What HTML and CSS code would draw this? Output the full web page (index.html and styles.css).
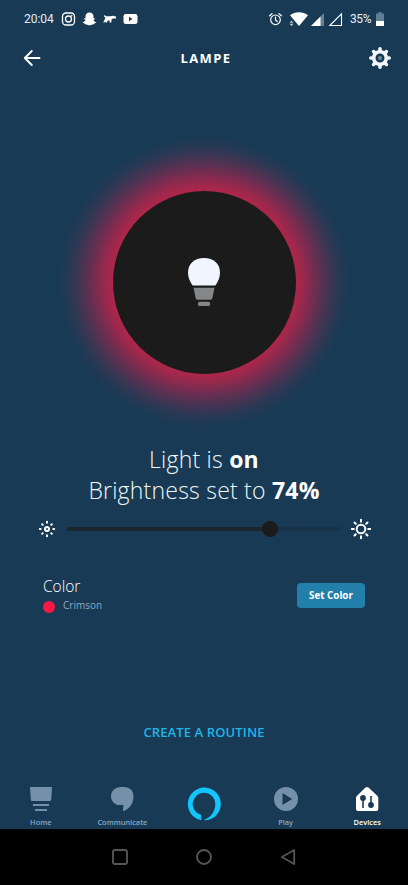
FILE: index.html
```html
<!DOCTYPE html>
<html lang="en">
<head>
<meta charset="utf-8">
<title>Lampe</title>
<link rel="stylesheet" href="styles.css">
</head>
<body>
<main class="app">
  <div class="status">
    <span class="clock">20:04</span>
    <svg class="notifications" width="78" height="16" viewBox="0 0 78 16">
      <g fill="none" stroke="#fff" stroke-width="1.3"><rect x="1.500" y="2" width="12" height="12" rx="3.5"/><circle cx="7.500" cy="8" r="3"/></g>
      <circle cx="10.700" cy="4.700" r=".8" fill="#fff"/>
      <path fill="#fff" d="M28.500 1.500c2.600 0 4 1.700 4 4v2l1.500-.2c.2.900-.6 1.200-1.400 1.600.5 1.400 1.500 2 2.700 2.400-.1.900-1.200 1-2 1.200l-.4.800c-1.500-.2-2.200.9-4.400 1.100-2.200-.2-2.900-1.300-4.400-1.100l-.4-.8c-.8-.2-1.900-.3-2-1.200 1.200-.4 2.200-1 2.700-2.400-.8-.4-1.600-.7-1.400-1.600l1.500.2v-2c0-2.300 1.400-4 4-4z"/>
      <path fill="#fff" d="M43.500 4l1.700 1.300h4.500l2-.6 3.300.8v2h-3l-1.500 1-.2 3h-1.600l-.2-2h-1.800l-.7 2h-1.500l.1-1.600-1.100 1.600h-1.300l1.600-3.200.6-1.800-1.500-1z"/>
      <rect x="62.500" y="3" width="14" height="10" rx="2.300" fill="#fff"/><path d="M68 5.800v4.400l3.500-2.200z" fill="#183a54"/>
    </svg>
    <svg class="signals" width="76" height="18" viewBox="0 0 76 18">
      <g fill="none" stroke="#fff" stroke-width="1.200" stroke-linecap="round"><circle cx="7.500" cy="9.800" r="4.800"/><path d="M7.500 7v3l1.700 1.500M1.500 5.800L4 3.700M13.500 5.800L11 3.700"/></g>
      <path fill="#fff" d="M22 5.200c5-3.900 13-3.900 18 0L31 16z"/>
      <path fill="#bcc6ce" d="M23.500 10.500l2 2.300h-4zM23.500 16l2-2.300h-4z"/>
      <path fill="#668097" d="M56 3v13H43z"/><path fill="#fff" d="M52.500 6.500V16H43z"/>
      <path d="M73.500 3.800v11.700H61.800z" fill="none" stroke="#fff" stroke-width="1.100"/>
    </svg>
    <span class="percent">35%</span>
    <svg class="battery" width="8" height="16" viewBox="0 0 8 16"><path fill="#617d91" d="M2.500 1h3v1.500H8V10H0V2.500h2.500z"/><path fill="#fff" d="M0 10h8v5H0z"/></svg>
  </div>

  <header class="header">
    <svg width="18" height="18" viewBox="0 0 18 18" fill="none" stroke="#fff" stroke-width="1.900" stroke-linecap="round" stroke-linejoin="round"><path d="M8.800 2L1.800 9l7 7M2 9h14.500"/></svg>
    <h1>LAMPE</h1>
    <svg class="gear" width="22" height="22" viewBox="-11 -11 22 22">
      <g stroke="#f3f7fc" stroke-width="3.600" stroke-linecap="round"><path d="M0-9.200V-7M0 7v2.200M-9.200 0H-7M7 0h2.200M-6.400-6.400L-5-5M5 5l1.400 1.400M-6.400 6.400L-5 5M5-5l1.400-1.400"/></g>
      <circle r="6.300" fill="none" stroke="#f3f7fc" stroke-width="3.600"/><circle r="2" fill="#6f8ba0"/>
    </svg>
  </header>

  <section class="hero">
    <div class="glow"><div class="lamp">
      <svg width="34" height="50" viewBox="0 0 34 50">
        <path fill="#f1f5ff" d="M17 1c9.500 0 16 5.500 16 14.800 0 5-2 8.900-4.600 12.700H5.600C3 24.700 1 20.800 1 15.800 1 6.500 7.500 1 17 1z"/>
        <path fill="#858688" d="M6.500 30.700h21l-2 9.600c-.3 1.800-.8 2.500-2 2.500h-13c-1.200 0-1.700-.7-2-2.500z"/>
        <rect x="11" y="44.700" width="12" height="4.300" rx="1.500" fill="#858688"/>
      </svg>
    </div></div>
  </section>

  <div class="summary">
    <p class="state">Light is <b>on</b></p>
    <p class="level">Brightness set to <b>74%</b></p>
  </div>

  <div class="dimmer">
    <svg width="18" height="18" viewBox="-9 -9 18 18"><circle r="2" fill="none" stroke="#fff" stroke-width="2.100"/><g stroke="#fff" stroke-width="2" stroke-linecap="round"><path d="M0-7.200v.9M0 6.300v.9M-7.200 0h.9M6.300 0h.9M-4.800-4.800l.5.500M4.300 4.300l.5.500M-4.800 4.800l.5-.5M4.300-4.300l.5-.5"/></g></svg>
    <div class="track"><div class="filled"></div><div class="knob"></div></div>
    <svg width="22" height="22" viewBox="-11 -11 22 22"><circle r="4.300" fill="none" stroke="#fff" stroke-width="2"/><g stroke="#fff" stroke-width="2" stroke-linecap="round"><path d="M0-9.200v2M0 7.200v2M-9.200 0h2M7.200 0h2M-6.500-6.500l1.300 1.300M5.200 5.200l1.300 1.300M-6.500 6.500l1.300-1.300M5.200-5.200l1.300-1.300"/></g></svg>
  </div>

  <section class="color">
    <div>
      <h2>Color</h2>
      <div class="value"><i class="swatch"></i><span>Crimson</span></div>
    </div>
    <button class="set">Set Color</button>
  </section>

  <div class="routine"><a>CREATE A ROUTINE</a></div>

  <nav class="tabs">
    <div class="tab">
      <svg width="26" height="28" viewBox="0 0 26 28" fill="#7591aa"><path d="M2 2h22l-.8 12.500c-.1 1-.6 1.500-1.500 1.500H4.300c-.9 0-1.400-.5-1.500-1.500z"/><path d="M5 19h16v2H5zM7 24h12v2H7z"/></svg>
      <span>Home</span>
    </div>
    <div class="tab">
      <svg width="26" height="28" viewBox="0 0 26 28"><path fill="#7591aa" d="M12 2h3c5.500 0 9.500 3.500 9.500 9 0 8-4.500 13.500-10.500 15.200l.3-6.100H11c-5 0-9-3.600-9-8.800C2 5.600 6.500 2 12 2z"/></svg>
      <span>Communicate</span>
    </div>
    <div class="tab alexa">
      <svg width="34" height="36" viewBox="-17 -17 34 36"><path fill="#12c5fc" fill-rule="evenodd" d="M-2.800 16.200A16.500 16.500 0 1 1 .6 16.500V15.500C5 14.200 11.300 9 11.300 0A11.300 11.300 0 1 0-2.800 11z"/></svg>
    </div>
    <div class="tab">
      <svg width="26" height="28" viewBox="0 0 26 28"><circle cx="13" cy="14" r="12" fill="#7591aa"/><path fill="#183a54" d="M9.500 8l9.700 6-9.700 6z"/></svg>
      <span>Play</span>
    </div>
    <div class="tab active">
      <svg width="26" height="28" viewBox="0 0 26 28"><path fill="#fff" d="M11.500 2.500q1.500-1.200 3 0l8.500 8c1 .9 1.300 1.500 1.300 2.700V24q0 2-2 2H4Q2 26 2 24V13.200c0-1.200.3-1.800 1.300-2.700z"/><g fill="#183a54"><circle cx="9" cy="13" r="2.900"/><circle cx="17" cy="20" r="2.900"/></g><path stroke="#183a54" stroke-width="1.600" d="M9 13v10M17 11v9"/></svg>
      <span>Devices</span>
    </div>
  </nav>

  <footer class="system">
    <svg width="18" height="18" viewBox="0 0 18 18"><rect x="2" y="2" width="14" height="14" rx="2" fill="none" stroke="#555" stroke-width="1.900"/></svg>
    <svg width="18" height="18" viewBox="0 0 18 18"><circle cx="9" cy="9" r="7" fill="none" stroke="#555" stroke-width="1.900"/></svg>
    <svg width="18" height="18" viewBox="0 0 18 18"><path d="M15.200 2v14L2.800 9z" fill="none" stroke="#555" stroke-width="1.800" stroke-linejoin="round"/></svg>
  </footer>
</main>
</body>
</html>
```
FILE: styles.css
```css
* { box-sizing: border-box; }
body { margin: 0; background: #183a54; color: #fff; font-family: "Open Sans", "Noto Sans", sans-serif; }
h1, h2, p { margin: 0; }
svg { display: block; flex: none; }
.app { width: 408px; height: 885px; display: flex; flex-direction: column; overflow: hidden; }

.status { height: 36px; flex: none; display: flex; align-items: center; padding: 1px 24px 0; font: 12px Roboto, sans-serif; color: #e6edf4; white-space: nowrap; }
.clock { width: 37px; letter-spacing: -.05px; }
.signals { margin-left: auto; }
.percent { width: 26px; margin-left: 6px; font-size: 12px; letter-spacing: -.4px; }
.battery { margin-left: 0; }

.header { height: 44px; flex: none; display: flex; align-items: center; justify-content: space-between; padding: 0 17px 0 23px; }
.header h1 { font-size: 13px; line-height: 18px; font-weight: 700; letter-spacing: 1.4px; padding-left: 2px; }

.hero { height: 364px; flex: none; display: flex; justify-content: center; padding-top: 41px; }
.glow { width: 322px; height: 322px; display: grid; place-items: center; background: radial-gradient(circle, #b3254b 0, #b3254b 90px, #9d284c 98px, #7b2c50 108px, #583152 118px, #393653 128px, #243954 137px, #1a3a54 145px, #183a54 153px); }
.lamp { width: 183px; height: 183px; border-radius: 50%; background: #1b1b1b; display: grid; place-items: center; }

.summary { height: 64px; flex: none; font-size: 23px; line-height: 31px; font-weight: 300; text-align: center; color: #f2f7fb; letter-spacing: .22px; }
.summary b { font-weight: 700; color: #fff; }

.dimmer { height: 42px; flex: none; display: flex; align-items: center; padding: 0 36px 0 38px; }
.track { position: relative; flex: 1; height: 4px; margin: 0 9px 0 11px; border-radius: 2px; background: #17334a; }
.filled { width: 74%; height: 4px; border-radius: 2px; background: #1a252e; }
.knob { position: absolute; left: 74%; top: -6px; width: 16px; height: 16px; margin-left: -8px; border-radius: 50%; background: #1b1b1b; }

.color { height: 90px; flex: none; display: flex; align-items: center; justify-content: space-between; padding: 0 43px; }
.color h2 { font-size: 15.500px; line-height: 22px; font-weight: 300; }
.value { display: flex; align-items: center; gap: 8px; height: 18px; color: #8aabc2; font-size: 10px; line-height: 14px; }
.value span { margin-top: -2px; }
.swatch { width: 12px; height: 12px; margin-top: 2px; border-radius: 50%; background: #fb1846; }
.set { width: 68px; height: 25px; padding: 0; border: 0; border-radius: 4px; background: #217fa9; color: #fff; font: 700 9.800px "Open Sans", sans-serif; }

.routine { flex: 1; display: flex; justify-content: center; padding-top: 82px; color: #20b5e8; font-size: 13px; line-height: 20px; font-weight: 600; letter-spacing: .12px; }

.tabs { height: 50px; flex: none; display: grid; grid-template-columns: repeat(5, 1fr); width: 408px; }
.tab { display: flex; flex-direction: column; align-items: center; padding-top: 6px; color: #86a7c5; font-size: 7.400px; line-height: 14px; font-weight: 600; }
.tab span { margin-top: 2px; }
.alexa { padding-top: 8px; }
.active { color: #fff; }

.system { height: 56px; flex: none; display: flex; justify-content: center; gap: 66px; padding-top: 19px; background: #000; }
```
